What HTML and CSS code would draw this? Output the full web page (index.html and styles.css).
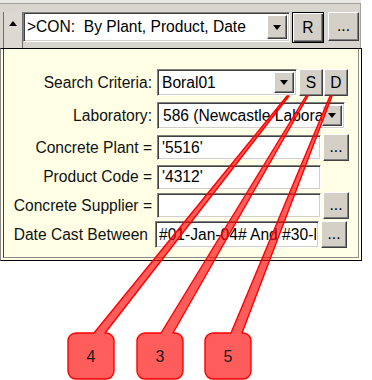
FILE: index.html
```html
<!DOCTYPE html>
<html>
<head>
<meta charset="utf-8">
<link rel="stylesheet" href="styles.css">
</head>
<body>
<div class="app">
  <div class="topline"></div>
  <div class="toolbar">
    <div class="spin"><span class="up-tri"></span></div>
    <div class="field combo top-combo">
      <span class="field-text">&gt;CON:&nbsp; By Plant, Product, Date</span>
      <span class="drop"><span class="down-tri"></span></span>
    </div>
    <div class="btn btn-default btn-r">R</div>
    <div class="btn btn-more-top">...</div>
  </div>
  <div class="panel">
    <div class="panel-inner">
      <div class="row row-1">
        <div class="label">Search Criteria:</div>
        <div class="field combo combo-search">
          <span class="field-text">Boral01</span>
          <span class="drop"><span class="down-tri"></span></span>
        </div>
        <div class="btn btn-small btn-s">S</div>
        <div class="btn btn-small btn-d">D</div>
      </div>
      <div class="row row-2">
        <div class="label">Laboratory:</div>
        <div class="field combo combo-lab">
          <span class="field-text">586 (Newcastle Laboratory)</span>
          <span class="drop"><span class="down-tri"></span></span>
        </div>
      </div>
      <div class="row row-3">
        <div class="label">Concrete Plant =</div>
        <div class="field text-field"><span class="field-text">'5516'</span></div>
        <div class="btn btn-more">...</div>
      </div>
      <div class="row row-4">
        <div class="label">Product Code =</div>
        <div class="field text-field"><span class="field-text">'4312'</span></div>
      </div>
      <div class="row row-5">
        <div class="label">Concrete Supplier =</div>
        <div class="field text-field"><span class="field-text"></span></div>
        <div class="btn btn-more">...</div>
      </div>
      <div class="row row-6">
        <div class="label label-date">Date Cast Between</div>
        <div class="field text-field date-field"><span class="field-text">#01-Jan-04# And #30-Dec-04#</span></div>
        <div class="btn btn-more">...</div>
      </div>
    </div>
  </div>
  <svg class="callouts" width="372" height="380" viewBox="0 0 372 380">
    <path class="callout" d="M76,333 H94 L287,96 L289,96 L105,333 H106 A8,8 0 0 1 114,341 V371 A8,8 0 0 1 106,379 H76 A8,8 0 0 1 68,371 V341 A8,8 0 0 1 76,333 Z"/>
    <path class="callout" d="M145,333 H161 L306,96 L308,96 L173,333 H175 A8,8 0 0 1 183,341 V371 A8,8 0 0 1 175,379 H145 A8,8 0 0 1 137,371 V341 A8,8 0 0 1 145,333 Z"/>
    <path class="callout" d="M213,333 H231 L330,96 L332,96 L242,333 H243 A8,8 0 0 1 251,341 V371 A8,8 0 0 1 243,379 H213 A8,8 0 0 1 205,371 V341 A8,8 0 0 1 213,333 Z"/>
    <text class="callout-num" x="91" y="362">4</text>
    <text class="callout-num" x="160" y="362">3</text>
    <text class="callout-num" x="228" y="362">5</text>
  </svg>
</div>
</body>
</html>
```

FILE: styles.css
```css
html, body {
  margin: 0;
  padding: 0;
  background: #ffffff;
}

body {
  width: 372px;
  height: 380px;
  overflow: hidden;
  font-family: "Liberation Sans", Arial, sans-serif;
  font-size: 15.6px;
  color: #000;
}

.app {
  position: relative;
  width: 372px;
  height: 380px;
}

.topline {
  height: 3px;
  width: 361px;
  background: #e9e8e4;
}

.toolbar {
  box-sizing: border-box;
  width: 361px;
  height: 45px;
  background: #d8d5ce;
  border-top: 1px solid #a4a29c;
  border-right: 1px solid #a4a29c;
  display: flex;
  align-items: flex-start;
  padding-top: 8px;
}

.spin {
  box-sizing: border-box;
  margin-left: 3px;
  width: 20px;
  height: 36px;
  border-left: 1px solid #6e6e6e;
  border-right: 1px solid #6e6e6e;
  background: #dcd9d2;
  display: flex;
  justify-content: center;
  padding-top: 9px;
}

.up-tri {
  width: 0;
  height: 0;
  border-left: 4px solid transparent;
  border-right: 4px solid transparent;
  border-bottom: 5px solid #000;
}

.down-tri {
  width: 0;
  height: 0;
  border-left: 4.5px solid transparent;
  border-right: 4.5px solid transparent;
  border-top: 5px solid #000;
}

/* sunken field */
.field {
  box-sizing: border-box;
  background: #fff;
  border: 1px solid;
  border-color: #808080 #ffffff #ffffff #808080;
  box-shadow: inset 1px 1px 0 #404040, inset -1px -1px 0 #d4d0c8;
  display: flex;
  align-items: center;
  overflow: hidden;
  position: relative;
  flex: none;
}

.field-text {
  flex: 1;
  min-width: 0;
  white-space: nowrap;
  overflow: hidden;
  padding-left: 4px;
  line-height: 18px;
}

.combo .drop {
  box-sizing: border-box;
  flex: none;
  width: 20px;
  align-self: stretch;
  margin: 2px 2px 2px 0;
  background: #d4d0c8;
  border: 1px solid;
  border-color: #ffffff #404040 #404040 #ffffff;
  box-shadow: inset -1px -1px 0 #808080;
  display: flex;
  align-items: center;
  justify-content: center;
}

.top-combo {
  margin-left: 0;
  width: 267px;
  height: 30px;
}

.top-combo .field-text {
  padding-left: 3px;
}

/* raised button */
.btn {
  box-sizing: border-box;
  flex: none;
  background: #d4d0c8;
  border: 1px solid;
  border-color: #ffffff #404040 #404040 #ffffff;
  box-shadow: inset -1px -1px 0 #808080;
  display: flex;
  align-items: center;
  justify-content: center;
  color: #000;
  line-height: 1;
}

.btn-default {
  border-color: #000;
  box-shadow: inset 1px 1px 0 #ffffff, inset -1px -1px 0 #404040, inset -2px -2px 0 #808080;
}

.btn-r {
  margin-left: 2px;
  width: 32px;
  height: 31px;
}

.btn-more-top {
  margin-left: 4px;
  width: 31px;
  height: 29px;
  padding-bottom: 2px;
}

.panel {
  box-sizing: border-box;
  width: 362px;
  height: 213px;
  background: #ffffe6;
  border: 1px solid #000;
  border-left-color: #8a8a8a;
  padding: 0 2px 2px 2px;
}

.panel-inner {
  box-sizing: border-box;
  height: 100%;
  border-left: 1px solid #404040;
  border-right: 1px solid #8c8c8c;
  border-bottom: 1px solid #8c8c8c;
  padding-top: 20px;
  display: flex;
  flex-direction: column;
}

.row {
  display: flex;
  align-items: center;
  flex: none;
}

.row-1 { height: 27px; }
.row-2 { height: 27px; margin-top: 6px; }
.row-3 { height: 27px; margin-top: 5px; }
.row-4 { height: 26px; margin-top: 3px; }
.row-5 { height: 27px; margin-top: 2px; }
.row-6 { height: 27px; margin-top: 2px; }

.label {
  flex: none;
  width: 148px;
  text-align: right;
  white-space: nowrap;
  color: #111;
}

.label-date {
  box-sizing: border-box;
  width: 146px;
  padding-right: 2px;
}

.combo-search {
  margin-left: 5px;
  width: 140px;
  height: 27px;
}

.combo-lab {
  margin-left: 5px;
  width: 188px;
  height: 27px;
}

.combo-lab .field-text {
  padding-left: 5px;
}

.btn-small {
  width: 24px;
  height: 27px;
}

.btn-s { margin-left: 2px; }
.btn-d { margin-left: 1px; }

.text-field {
  margin-left: 5px;
  width: 164px;
  height: 25px;
}

.date-field {
  margin-left: 5px;
  width: 164px;
  height: 27px;
  padding-right: 2px;
}

.date-field .field-text {
  padding-left: 3px;
}

.btn-more {
  margin-left: 2px;
  width: 26px;
  height: 27px;
  padding-bottom: 2px;
}

.callouts {
  position: absolute;
  left: 0;
  top: 0;
  pointer-events: none;
}

.callout {
  fill: rgba(255, 0, 0, 0.64);
  stroke: #ff0000;
  stroke-width: 1.4;
  stroke-linejoin: round;
}

.callout-num {
  font-family: "Liberation Sans", Arial, sans-serif;
  font-size: 16px;
  fill: #1a1a1a;
  text-anchor: middle;
}
```
